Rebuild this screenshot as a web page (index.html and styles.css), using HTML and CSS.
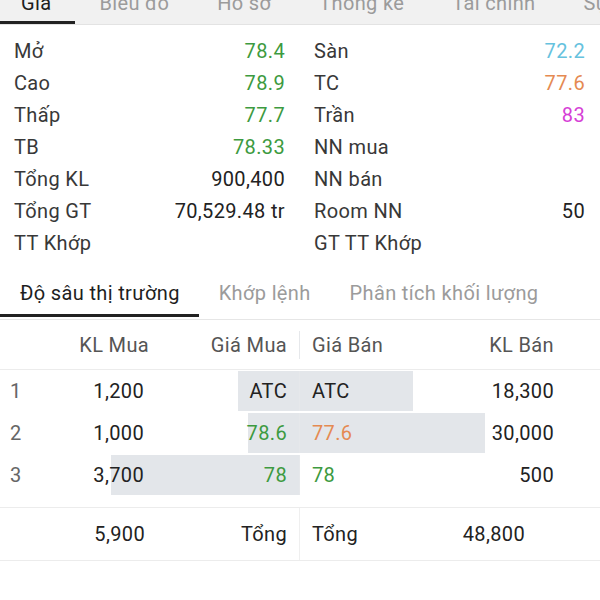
FILE: index.html
```html
<!DOCTYPE html>
<html lang="vi">
<head>
    <meta charset="UTF-8">
    <meta name="viewport" content="width=device-width, initial-scale=1.0">
    <title>Giá cổ phiếu</title>
    <link rel="stylesheet" href="styles.css">
</head>
<body>

    <div class="top-tabs">
        <span class="top-tab active">Giá</span>
        <span class="top-tab">Biểu đồ</span>
        <span class="top-tab">Hồ sơ</span>
        <span class="top-tab">Thống kê</span>
        <span class="top-tab">Tài chính</span>
        <span class="top-tab">Sự kiện</span>
    </div>

    <div class="stats">
        <div class="stats-col">
            <div class="stat"><span class="stat-label">Mở</span><span class="up">78.4</span></div>
            <div class="stat"><span class="stat-label">Cao</span><span class="up">78.9</span></div>
            <div class="stat"><span class="stat-label">Thấp</span><span class="up">77.7</span></div>
            <div class="stat"><span class="stat-label">TB</span><span class="up">78.33</span></div>
            <div class="stat"><span class="stat-label">Tổng KL</span><span>900,400</span></div>
            <div class="stat"><span class="stat-label">Tổng GT</span><span>70,529.48 tr</span></div>
            <div class="stat"><span class="stat-label">TT Khớp</span><span></span></div>
        </div>
        <div class="stats-col">
            <div class="stat"><span class="stat-label">Sàn</span><span class="floor">72.2</span></div>
            <div class="stat"><span class="stat-label">TC</span><span class="ref">77.6</span></div>
            <div class="stat"><span class="stat-label">Trần</span><span class="ceil">83</span></div>
            <div class="stat"><span class="stat-label">NN mua</span><span></span></div>
            <div class="stat"><span class="stat-label">NN bán</span><span></span></div>
            <div class="stat"><span class="stat-label">Room NN</span><span>50</span></div>
            <div class="stat"><span class="stat-label">GT TT Khớp</span><span></span></div>
        </div>
    </div>

    <div class="sub-tabs">
        <span class="sub-tab active">Độ sâu thị trường</span>
        <span class="sub-tab">Khớp lệnh</span>
        <span class="sub-tab">Phân tích khối lượng</span>
    </div>

    <div class="depth-head">
        <div class="buy"><span></span><span>KL Mua</span><span>Giá Mua</span></div>
        <div class="sell"><span>Giá Bán</span><span>KL Bán</span></div>
    </div>

    <div class="depth-rows">
        <div class="depth-row">
            <div class="buy" style="--fill: 61px"><span class="idx">1</span><span>1,200</span><span>ATC</span></div>
            <div class="sell" style="--fill: 113px"><span>ATC</span><span>18,300</span></div>
        </div>
        <div class="depth-row">
            <div class="buy" style="--fill: 51px"><span class="idx">2</span><span>1,000</span><span class="up">78.6</span></div>
            <div class="sell" style="--fill: 185px"><span class="ref">77.6</span><span>30,000</span></div>
        </div>
        <div class="depth-row">
            <div class="buy" style="--fill: 188px"><span class="idx">3</span><span>3,700</span><span class="up">78</span></div>
            <div class="sell" style="--fill: 0px"><span class="up">78</span><span>500</span></div>
        </div>
    </div>

    <div class="depth-total">
        <div class="buy"><span></span><span>5,900</span><span>Tổng</span></div>
        <div class="sell"><span>Tổng</span><span>48,800</span></div>
    </div>

</body>
</html>
```

FILE: styles.css
```css
body {
    margin: 0;
    font-family: Roboto, "Noto Sans", sans-serif;
    color: #222;
    background-color: #fff;
    overflow: hidden;
}

/* colours of prices */
.up { color: #3d9a40; }
.ref { color: #e58a52; }
.floor { color: #66c2de; }
.ceil { color: #d63fd6; }

/* top tab bar, scrolled partly out of view */
.top-tabs {
    display: flex;
    margin-top: -20px;
    background-color: #f1f1f1;
    border-bottom: 1px solid #e3e3e3;
    overflow: hidden;
    white-space: nowrap;
}

.top-tab {
    flex-shrink: 0;
    box-sizing: border-box;
    height: 44px;
    padding: 12px 24px 0;
    font-size: 20px;
    letter-spacing: 0.35px;
    line-height: 22px;
    color: #9b9b9b;
    border-bottom: 3px solid transparent;
}

.top-tab.active {
    padding-left: 21px;
    color: #1e1e1e;
    border-bottom-color: #222;
}

/* stats */
.stats {
    display: grid;
    grid-template-columns: 1fr 1fr;
    padding: 10px 0 11px;
}

.stats-col {
    padding: 0 15px 0 14px;
}

.stat {
    display: flex;
    justify-content: space-between;
    height: 32px;
    line-height: 32px;
    font-size: 20px;
    letter-spacing: 0.35px;
}

.stat-label {
    color: #383838;
}

/* second tab bar */
.sub-tabs {
    display: flex;
    padding-bottom: 2px;
    border-bottom: 1px solid #e6e6e6;
}

.sub-tab {
    padding: 12px 19px 10px 20px;
    font-size: 20px;
    letter-spacing: 0.35px;
    line-height: 22px;
    color: #9b9b9b;
    border-bottom: 3px solid transparent;
}

.sub-tab.active {
    color: #1e1e1e;
    border-bottom-color: #222;
}

/* market depth */
.depth-head,
.depth-row,
.depth-total {
    display: grid;
    grid-template-columns: 299px 301px;
    font-size: 20px;
    letter-spacing: 0.35px;
}

.buy {
    display: grid;
    grid-template-columns: 30px 104px 1fr;
    padding: 0 12px 0 10px;
}

.buy span {
    text-align: right;
}

.buy .idx {
    text-align: left;
    color: #666;
}

.sell {
    display: flex;
    justify-content: space-between;
    padding: 0 46px 0 12px;
    border-left: 1px solid #e6e8eb;
}

.depth-head {
    height: 49px;
    align-items: center;
    color: #555;
    border-bottom: 1px solid #ececec;
}

.depth-head .buy,
.depth-head .sell {
    line-height: 28px;
}

.depth-head .buy {
    grid-template-columns: 30px 109px 1fr;
}

.depth-rows {
    display: flex;
    flex-direction: column;
    gap: 2px;
    padding-top: 1px;
}

.depth-row {
    height: 40px;
    line-height: 40px;
}

.depth-row .buy {
    background: linear-gradient(to left, #e3e6ea var(--fill), transparent var(--fill));
}

.depth-row .sell {
    background: linear-gradient(to right, #e3e6ea var(--fill), transparent var(--fill));
}

.depth-total {
    margin-top: 12px;
    height: 52px;
    line-height: 52px;
    border-top: 1px solid #ececec;
    border-bottom: 1px solid #ececec;
}

.depth-total .buy {
    grid-template-columns: 30px 105px 1fr;
}

.depth-total .sell {
    padding-right: 75px;
    border-left-color: #efefef;
}
```
